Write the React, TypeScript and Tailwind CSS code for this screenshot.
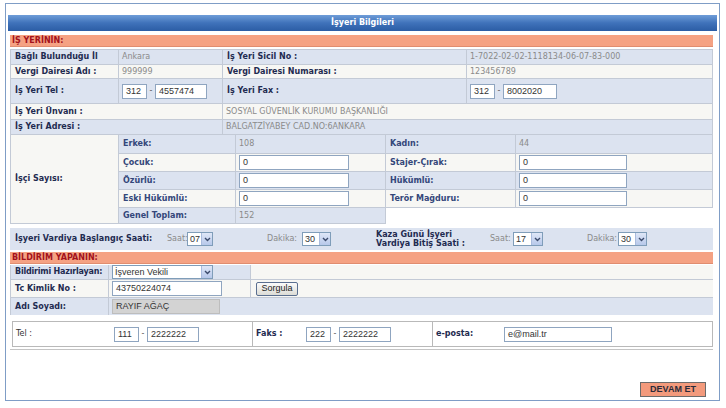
import React from 'react'

const BLUE = 'bg-[#dce3f0]'
const CREAM = 'bg-[#f7f7f4]'

function Chevron() {
  return (
    <svg width="7" height="5" viewBox="0 0 7 5">
      <path d="M1 1 L3.5 3.5 L6 1" fill="none" stroke="#3b4a6b" strokeWidth="1.4" />
    </svg>
  )
}

function Select({ value, className }: { value: string; className: string }) {
  return (
    <div className={`flex h-[14px] border border-[#7f9db9] bg-white items-stretch shrink-0 ${className}`}>
      <span className="flex-1 flex items-center pl-[2px] text-[#333] font-['Liberation_Sans',sans-serif] text-[9px] whitespace-nowrap">{value}</span>
      <span className="w-[11px] bg-gradient-to-b from-[#dfe7f7] to-[#b7c8ea] border-l border-[#a9bbdd] flex items-center justify-center">
        <Chevron />
      </span>
    </div>
  )
}

function Input({ value, className }: { value: string; className: string }) {
  return (
    <div className={`h-[15px] border border-[#8fa5c0] bg-white flex items-center pl-[3px] shrink-0 text-[#333] font-['Liberation_Sans',sans-serif] text-[9px] ${className}`}>
      {value}
    </div>
  )
}

function Label({ children, className = '' }: { children: React.ReactNode; className?: string }) {
  return (
    <div className={`flex items-center shrink-0 px-[4px] border-r border-[#c3cad6] font-bold text-[#1f2b50] whitespace-nowrap ${className}`}>
      {children}
    </div>
  )
}

function Val({ children, className = '' }: { children?: React.ReactNode; className?: string }) {
  return (
    <div className={`flex items-center shrink-0 px-[3px] border-r border-[#c3cad6] text-[#8a8a8a] whitespace-nowrap ${className}`}>
      {children}
    </div>
  )
}

function Phone({ a, b, w }: { a: string; b: string; w: string }) {
  return (
    <div className="flex items-center">
      <Input value={a} className="w-[25px]" />
      <span className="w-[8px] text-center text-[#555]">-</span>
      <Input value={b} className={w} />
    </div>
  )
}

export default function App() {
  return (
    <div className="w-[726px] h-[408px] bg-white overflow-hidden font-['DejaVu_Sans',sans-serif] text-[8px] leading-none">
      <div className="ml-[5px] mt-[3px] w-[715px] h-[398px] border border-[#7f9dc6] pt-[11px] flex flex-col">
        <div className="mx-[2px] h-[16px] bg-gradient-to-b from-[#6f9dd8] via-[#3f72ba] to-[#2b5da5] flex items-center justify-center text-white font-bold">
          İşyeri Bilgileri
        </div>

        <div className="ml-[4px] mr-[6px] mt-[4px] flex flex-col flex-1">
          <div className="h-[12px] bg-[#f5a283] border-b border-[#e08d70] text-[#a3121c] font-bold flex items-center px-[2px]">
            İŞ YERİNİN:
          </div>

          {/* iş yeri */}
          <div className="mt-[2px] border-l border-t border-[#c3cad6] flex flex-col">
            <div className={`flex h-[15px] border-b border-[#c3cad6] ${BLUE}`}>
              <Label className="w-[108px]">Bağlı Bulunduğu İl</Label>
              <Val className="w-[104px]">Ankara</Val>
              <Label className="w-[244px]">İş Yeri Sicil No :</Label>
              <Val className="flex-1">1-7022-02-02-1118134-06-07-83-000</Val>
            </div>
            <div className={`flex h-[14px] border-b border-[#c3cad6] ${CREAM}`}>
              <Label className="w-[108px]">Vergi Dairesi Adı :</Label>
              <Val className="w-[104px]">999999</Val>
              <Label className="w-[244px]">Vergi Dairesi Numarası :</Label>
              <Val className="flex-1">123456789</Val>
            </div>
            <div className={`flex h-[25px] border-b border-[#c3cad6] ${BLUE}`}>
              <Label className="w-[108px]">İş Yeri Tel :</Label>
              <Val className="w-[104px]"><Phone a="312" b="4557474" w="w-[52px]" /></Val>
              <Label className="w-[244px]">İş Yeri Fax :</Label>
              <Val className="flex-1"><Phone a="312" b="8002020" w="w-[54px]" /></Val>
            </div>
            <div className={`flex h-[16px] border-b border-[#c3cad6] ${CREAM}`}>
              <Label className="w-[212px]">İş Yeri Ünvanı :</Label>
              <Val className="flex-1">SOSYAL GÜVENLİK KURUMU BAŞKANLIĞI</Val>
            </div>
            <div className={`flex h-[15px] border-b border-[#c3cad6] ${BLUE}`}>
              <Label className="w-[212px]">İş Yeri Adresi :</Label>
              <Val className="flex-1">BALGATZİYABEY CAD.NO:6ANKARA</Val>
            </div>
          </div>

          {/* işçi sayısı */}
          <div className="flex border-l border-[#c3cad6]">
            <div className={`w-[108px] shrink-0 flex items-center px-[4px] font-bold text-[#1f2b50] border-r border-b border-[#c3cad6] ${CREAM}`}>
              İşçi Sayısı:
            </div>
            <div className="flex-1 flex flex-col">
              <div className={`flex h-[19px] border-b border-[#c3cad6] ${BLUE}`}>
                <Label className="w-[117px] text-[#34477a]">Erkek:</Label>
                <Val className="w-[150px]">108</Val>
                <Label className="w-[130px] text-[#34477a]">Kadın:</Label>
                <Val className="flex-1">44</Val>
              </div>
              <div className={`flex h-[18px] border-b border-[#c3cad6] ${CREAM}`}>
                <Label className="w-[117px] text-[#34477a]">Çocuk:</Label>
                <Val className="w-[150px]"><Input value="0" className="w-[110px]" /></Val>
                <Label className="w-[130px] text-[#34477a]">Stajer-Çırak:</Label>
                <Val className="flex-1"><Input value="0" className="w-[108px]" /></Val>
              </div>
              <div className={`flex h-[18px] border-b border-[#c3cad6] ${BLUE}`}>
                <Label className="w-[117px] text-[#34477a]">Özürlü:</Label>
                <Val className="w-[150px]"><Input value="0" className="w-[110px]" /></Val>
                <Label className="w-[130px] text-[#34477a]">Hükümlü:</Label>
                <Val className="flex-1"><Input value="0" className="w-[108px]" /></Val>
              </div>
              <div className={`flex h-[18px] border-b border-[#c3cad6] ${CREAM}`}>
                <Label className="w-[117px] text-[#34477a]">Eski Hükümlü:</Label>
                <Val className="w-[150px]"><Input value="0" className="w-[110px]" /></Val>
                <Label className="w-[130px] text-[#34477a]">Terör Mağduru:</Label>
                <Val className="flex-1"><Input value="0" className="w-[108px]" /></Val>
              </div>
              <div className="flex h-[16px]">
                <div className={`flex border-b border-[#c3cad6] ${BLUE}`}>
                  <Label className="w-[117px] text-[#34477a]">Genel Toplam:</Label>
                  <Val className="w-[150px]">152</Val>
                </div>
              </div>
            </div>
          </div>

          {/* vardiya */}
          <div className={`mt-[4px] h-[22px] flex items-center ${BLUE}`}>
            <div className="w-[157px] shrink-0 pl-[5px] font-bold text-[#1f2b50] whitespace-nowrap">İşyeri Vardiya Başlangıç Saati:</div>
            <span className="w-[20px] shrink-0 text-[#8a8a8a]">Saat:</span>
            <Select value="07" className="w-[26px]" />
            <span className="w-[54px] shrink-0" />
            <span className="w-[35px] shrink-0 text-[#8a8a8a]">Dakika:</span>
            <Select value="30" className="w-[29px]" />
            <span className="w-[45px] shrink-0" />
            <div className="w-[114px] shrink-0 font-bold text-[#1f2b50] leading-[9px] whitespace-nowrap">
              Kaza Günü İşyeri<br />Vardiya Bitiş Saati :
            </div>
            <span className="w-[23px] shrink-0 text-[#8a8a8a]">Saat:</span>
            <Select value="17" className="w-[30px]" />
            <span className="w-[44px] shrink-0" />
            <span className="w-[31px] shrink-0 text-[#8a8a8a]">Dakika:</span>
            <Select value="30" className="w-[29px]" />
          </div>

          <div className="mt-[2px] h-[12px] bg-[#f5a283] border-b border-[#e08d70] text-[#a3121c] font-bold flex items-center px-[2px]">
            BİLDİRİM YAPANIN:
          </div>

          {/* bildirim */}
          <div className="mt-[1px] border-l border-[#c3cad6] flex flex-col">
            <div className="flex h-[15px] border-b border-[#c3cad6]">
              <Label className={`w-[98px] tracking-[-0.2px] ${BLUE}`}>Bildirimi Hazırlayan:</Label>
              <Val className={`w-[142px] ${BLUE}`}><Select value="İşveren Vekili" className="w-[101px]" /></Val>
              <div className={`flex-1 ${CREAM}`} />
            </div>
            <div className={`flex h-[18px] border-b border-[#c3cad6] ${CREAM}`}>
              <Label className="w-[98px]">Tc Kimlik No :</Label>
              <Val className="w-[142px]"><Input value="43750224074" className="w-[110px]" /></Val>
              <div className="flex-1 flex items-center pl-[5px]">
                <div className="h-[14px] w-[42px] border border-[#5a6f90] rounded-[2px] bg-gradient-to-b from-[#fbfbfb] to-[#dcdcd6] flex items-center justify-center text-[#222] font-['Liberation_Sans',sans-serif] text-[9px]">
                  Sorgula
                </div>
              </div>
            </div>
            <div className={`flex h-[17px] ${BLUE}`}>
              <Label className="w-[98px]">Adı Soyadı:</Label>
              <Val className="w-[142px] border-r-0">
                <div className="h-[15px] w-[108px] bg-[#d3d3d3] border border-[#bdbdbd] flex items-center pl-[3px] text-[#333] font-['Liberation_Sans',sans-serif] text-[9px]">RAYIF AĞAÇ</div>
              </Val>
            </div>
          </div>

          {/* tel */}
          <div className="mt-[6px] ml-[2px] h-[26px] border border-[#b9b9b9] flex bg-white">
            <div className="w-[240px] shrink-0 flex items-center border-r border-[#b9b9b9]">
              <span className="w-[101px] pl-[3px] text-[#333]">Tel :</span>
              <Phone a="111" b="2222222" w="w-[52px]" />
            </div>
            <div className="w-[180px] shrink-0 flex items-center border-r border-[#b9b9b9]">
              <span className="w-[53px] pl-[3px] font-bold text-[#1f2b50]">Faks :</span>
              <Phone a="222" b="2222222" w="w-[52px]" />
            </div>
            <div className="flex-1 flex items-center">
              <span className="w-[71px] pl-[3px] font-bold text-[#1f2b50]">e-posta:</span>
              <Input value="e@mail.tr" className="w-[108px]" />
            </div>
          </div>
          <div className="mt-[2px] h-[1px] bg-[#c4c4c4]" />

          <div className="flex-1" />
          <div className="self-end mr-[7px] mb-[3px] w-[66px] h-[15px] bg-[#f39a7c] border border-[#6b6b6b] flex items-center justify-center font-bold text-[#2a2a3a] font-['Liberation_Sans_Narrow','Liberation_Sans',sans-serif] text-[9px]">
            DEVAM ET
          </div>
        </div>
      </div>
    </div>
  )
}
